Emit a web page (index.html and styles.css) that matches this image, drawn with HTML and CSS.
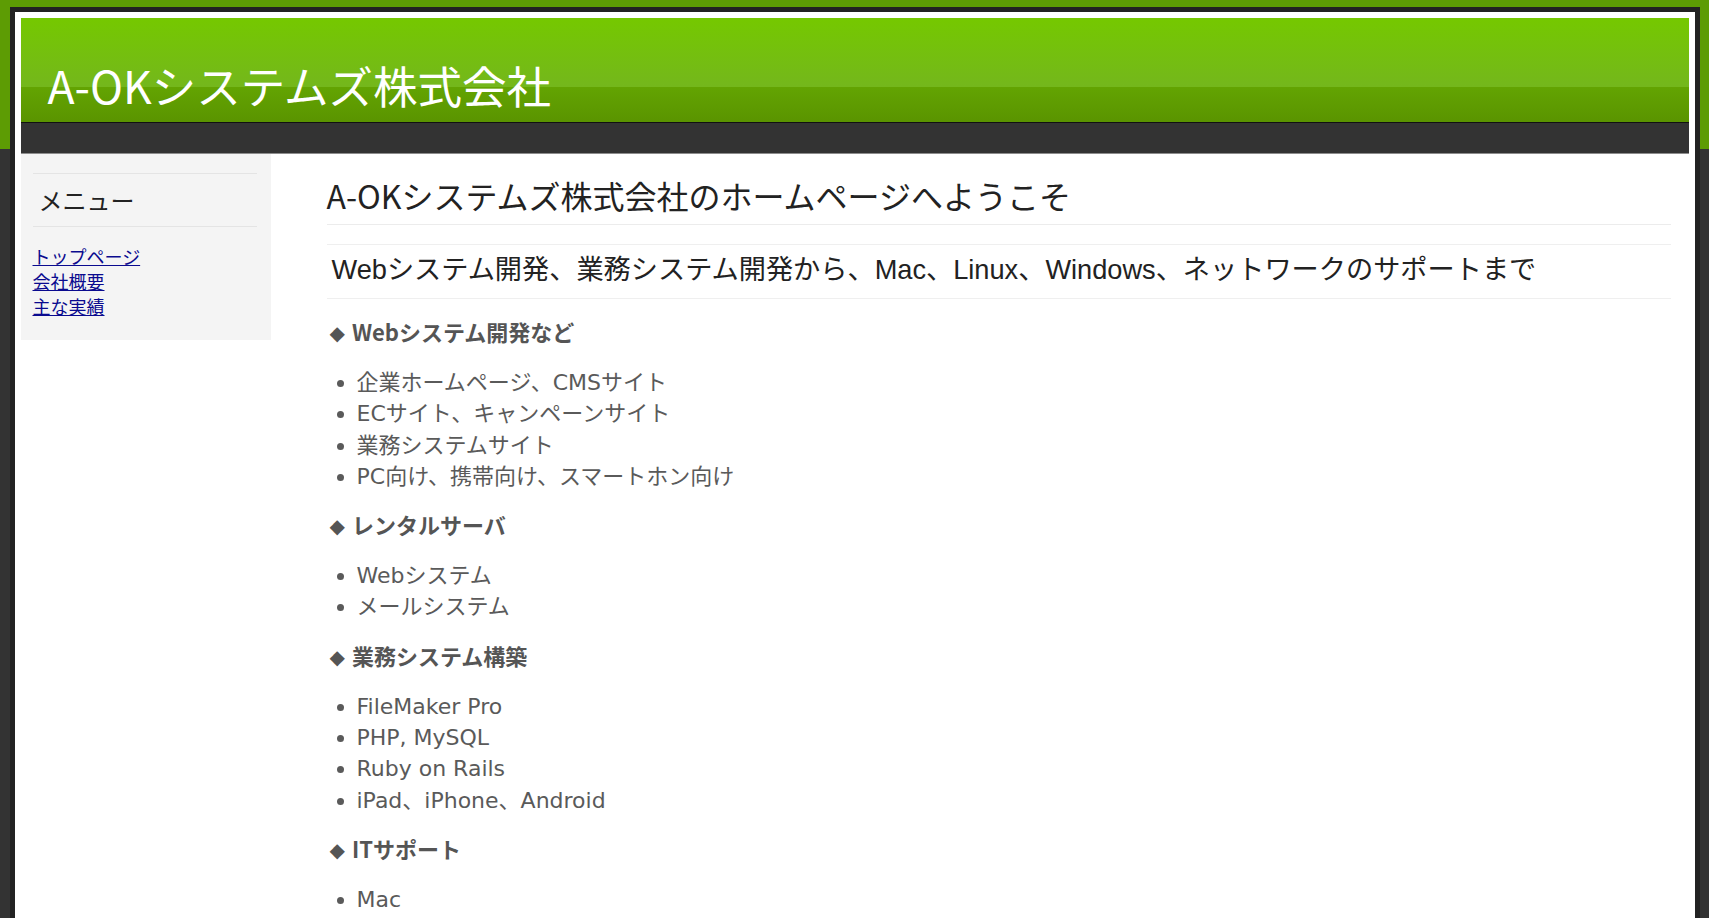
FILE: index.html
```html
<!DOCTYPE html>
<html lang="ja">
<head>
    <meta charset="UTF-8">
    <meta name="viewport" content="width=device-width, initial-scale=1.0">
    <title>A-OKシステムズ株式会社</title>
    <link rel="stylesheet" href="styles.css">
</head>
<body>
    <div class="page">
        <header class="site-header">
            <h1 class="site-title">A-OKシステムズ株式会社</h1>
        </header>
        <nav class="nav-bar"></nav>
        <div class="wrap">
            <aside class="sidebar">
                <h2 class="menu-title">メニュー</h2>
                <ul class="menu">
                    <li><a href="#">トップページ</a></li>
                    <li><a href="#">会社概要</a></li>
                    <li><a href="#">主な実績</a></li>
                </ul>
            </aside>
            <main class="main">
                <h2 class="page-title">A-OKシステムズ株式会社のホームページへようこそ</h2>
                <p class="lead">Webシステム開発、業務システム開発から、Mac、Linux、Windows、ネットワークのサポートまで</p>

                <h3 class="section"><span class="mark">◆</span>Webシステム開発など</h3>
                <ul class="items">
                    <li>企業ホームページ、CMSサイト</li>
                    <li>ECサイト、キャンペーンサイト</li>
                    <li>業務システムサイト</li>
                    <li>PC向け、携帯向け、スマートホン向け</li>
                </ul>

                <h3 class="section"><span class="mark">◆</span>レンタルサーバ</h3>
                <ul class="items">
                    <li>Webシステム</li>
                    <li>メールシステム</li>
                </ul>

                <h3 class="section"><span class="mark">◆</span>業務システム構築</h3>
                <ul class="items">
                    <li>FileMaker Pro</li>
                    <li>PHP, MySQL</li>
                    <li>Ruby on Rails</li>
                    <li>iPad、iPhone、Android</li>
                </ul>

                <h3 class="section"><span class="mark">◆</span>ITサポート</h3>
                <ul class="items">
                    <li>Mac</li>
                    <li>Windows</li>
                    <li>Linux</li>
                    <li>ネットワーク</li>
                </ul>
            </main>
        </div>
    </div>
</body>
</html>
```

FILE: styles.css
```css
body {
    margin: 0;
    padding-top: 7px;
    background: linear-gradient(#5d9c04 0, #5d9c04 149px, #333 149px);
    font-family: "Noto Sans CJK JP", sans-serif;
}
.page {
    width: 1668px;
    margin: 0 auto;
    border: 5px solid #222;
    padding: 6px;
    background: #fff;
}
.site-header {
    height: 105px;
    box-sizing: border-box;
    padding: 31px 0 0 27px;
    display: flex;
    align-items: center;
    border-bottom: 1px solid #111;
    background: linear-gradient(#75c800 0%, #74b71c 66%, #63a402 66%, #5a9400 100%);
}
.site-title {
    margin: 0;
    font-size: 44.5px;
    font-weight: normal;
    line-height: 1;
    color: #fff;
}
.nav-bar {
    height: 30px;
    background: #333;
    border-bottom: 1px solid #8d8d8d;
}
.wrap {
    display: flex;
    align-items: flex-start;
}
.sidebar {
    width: 250px;
    box-sizing: border-box;
    padding: 19px 14px 21px 12px;
    background: #f4f4f4;
}
.menu-title {
    margin: 0;
    padding-left: 6px;
    font-size: 24px;
    font-weight: normal;
    line-height: 52px;
    color: #222;
    border-top: 1px solid #e4e4e4;
    border-bottom: 1px solid #e4e4e4;
}
.menu {
    list-style: none;
    margin: 17px 0 0;
    padding: 0;
    font-size: 18px;
    line-height: 25px;
}
.menu a {
    color: #0a0a8f;
}
.main {
    flex: 1;
    padding: 0 18px 0 56px;
    color: #555;
}
.page-title {
    margin: 21px 0 0;
    padding-bottom: 9px;
    font-size: 32px;
    font-weight: normal;
    line-height: 40px;
    color: #222;
    border-bottom: 1px solid #ececec;
}
.lead {
    margin: 19px 0 0;
    padding: 7px 0 10px 5px;
    font-family: "Liberation Sans", "Noto Sans CJK JP", sans-serif;
    font-size: 27.2px;
    line-height: 36px;
    color: #222;
    border-top: 1px solid #efefef;
    border-bottom: 1px solid #efefef;
}
.section {
    margin: 17px 0 19px;
    padding-left: 3px;
    font-size: 22px;
    line-height: 30px;
    color: #555;
}
.mark {
    font-family: "DejaVu Sans", sans-serif;
    font-size: 20px;
    line-height: 1;
    vertical-align: 1px;
    margin-right: 7px;
}
.items {
    margin: 21px 0 17px;
    padding-left: 30px;
    font-family: "DejaVu Sans", "Noto Sans CJK JP", sans-serif;
    font-size: 22px;
    line-height: 31.3px;
    color: #5a5a5a;
}
```
